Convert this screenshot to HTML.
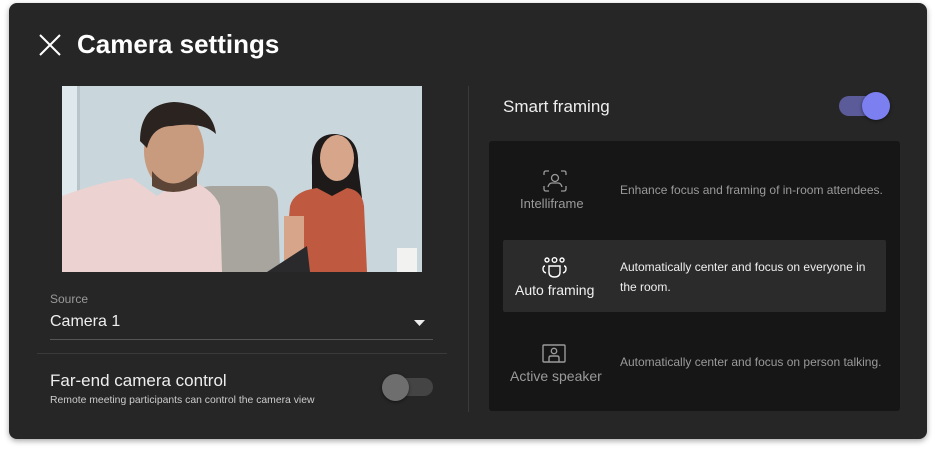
<!DOCTYPE html>
<html><head><style>
*{margin:0;padding:0;box-sizing:border-box}
body{width:936px;height:454px;background:#fff;font-family:"Liberation Sans",Roboto,sans-serif;position:relative;overflow:hidden}
.panel{position:absolute;left:9px;top:3px;width:918px;height:436px;background:#262626;border-radius:8px;box-shadow:0 2px 6px rgba(0,0,0,.35)}
.abs{position:absolute}
.t{color:#fff}
</style></head><body>
<div class="panel"></div>
<svg class="abs" style="left:38px;top:33px" width="24" height="24"><path d="M2 2L22 22M22 2L2 22" stroke="#fff" stroke-width="2"/></svg>
<div class="abs t" style="left:77px;top:29px;font-size:26px;font-weight:bold">Camera settings</div>

<svg class="abs" style="left:62px;top:86px" width="360" height="186" viewBox="0 0 360 186">
<rect width="360" height="186" fill="#c9d6dc"/>
<rect x="0" width="15" height="186" fill="#dfe8ec"/>
<rect x="15" width="3" height="186" fill="#b8c4c9"/>
<path d="M138 105 Q140 100 150 100 L205 100 Q215 102 216 115 L218 186 L150 186 Z" fill="#a8a59f"/>
<path d="M0 110 Q40 95 70 92 L95 110 L120 92 Q150 100 158 120 L160 186 L0 186Z" fill="#ecd2d0"/>
<ellipse cx="112" cy="65" rx="30" ry="40" fill="#c89a7e"/>
<path d="M78 55 Q78 18 112 16 Q150 18 154 48 Q140 35 110 40 Q90 40 85 62Z" fill="#2b2320"/>
<path d="M90 85 Q110 110 135 85 L135 100 Q110 112 90 100Z" fill="#5c4536"/>
<path d="M250 80 Q248 48 273 48 Q298 50 296 80 L300 112 L250 110Z" fill="#1e1a19"/>
<ellipse cx="275" cy="72" rx="17" ry="23" fill="#d7a68a"/>
<path d="M222 186 L228 120 Q232 105 255 102 L270 110 L285 102 Q300 104 302 120 L305 186Z" fill="#bf5a40"/>
<rect x="222" y="130" width="20" height="56" fill="#d7a68a"/>
<path d="M205 186 L245 160 L248 186Z" fill="#2a2a2c"/>
<rect x="335" y="162" width="20" height="24" fill="#f2f2f0"/>
</svg>

<div class="abs" style="left:50px;top:292px;font-size:12px;color:#9a9a9a">Source</div>
<div class="abs t" style="left:50px;top:313px;font-size:16px;color:#eee">Camera 1</div>
<svg class="abs" style="left:414px;top:320px" width="11" height="6"><path d="M0 0H11L5.5 6Z" fill="#eee"/></svg>
<div class="abs" style="left:50px;top:339px;width:383px;height:1px;background:#555"></div>
<div class="abs" style="left:37px;top:353px;width:410px;height:1px;background:#3a3a3a"></div>
<div class="abs t" style="left:50px;top:371px;font-size:17px;color:#eee">Far-end camera control</div>
<div class="abs" style="left:50px;top:395px;font-size:10.4px;color:#ccc">Remote meeting participants can control the camera view</div>
<div class="abs" style="left:385px;top:378px;width:48px;height:18px;border-radius:9px;background:#444"></div>
<div class="abs" style="left:382px;top:374px;width:27px;height:27px;border-radius:50%;background:#6e6e6e;box-shadow:0 1px 3px rgba(0,0,0,.5)"></div>

<div class="abs" style="left:468px;top:86px;width:1px;height:326px;background:#3a3a3a"></div>
<div class="abs t" style="left:503px;top:97px;font-size:17px;color:#eee">Smart framing</div>
<div class="abs" style="left:839px;top:96px;width:36px;height:20px;border-radius:10px;background:#5b5b9a"></div>
<div class="abs" style="left:862px;top:92px;width:28px;height:28px;border-radius:50%;background:#7b7ff0;box-shadow:0 1px 3px rgba(0,0,0,.5)"></div>

<div class="abs" style="left:489px;top:141px;width:411px;height:270px;background:#161616;border-radius:3px"></div>
<div class="abs" style="left:503px;top:240px;width:383px;height:72px;background:#2b2b2b;border-radius:2px"></div>

<svg class="abs" style="left:543px;top:170px" width="24" height="24" fill="none" stroke="#9a9a9a" stroke-width="1.3"><path d="M1 5V3Q1 1 3 1H6M18 1H21Q23 1 23 3V5M1 16V19Q1 21 3 21H6M23 16V19Q23 21 21 21H18"/><circle cx="12" cy="8" r="3.5"/><path d="M5 17Q6 13 9 13H15Q18 13 19 17"/></svg>
<div class="abs" style="left:520px;top:196px;font-size:13px;color:#9a9a9a">Intelliframe</div>
<div class="abs" style="left:620px;top:183px;font-size:12px;color:#9a9a9a">Enhance focus and framing of in-room attendees.</div>

<svg class="abs" style="left:542px;top:257px" width="25" height="22" fill="none" stroke="#fff" stroke-width="1.4"><circle cx="5" cy="3" r="2"/><circle cx="12.5" cy="3" r="2.3"/><circle cx="20" cy="3" r="2"/><path d="M3 9Q1 9 1 12Q1 15 4 16M22 9Q24 9 24 12Q24 15 21 16"/><path d="M7 9H18V15Q18 20 12.5 20Q7 20 7 15Z"/></svg>
<div class="abs t" style="left:515px;top:282px;font-size:14px;color:#f0f0f0">Auto framing</div>
<div class="abs t" style="left:620px;top:257px;font-size:12px;line-height:20px;color:#eee;width:260px">Automatically center and focus on everyone in the room.</div>

<svg class="abs" style="left:542px;top:344px" width="24" height="20" fill="none" stroke="#9a9a9a" stroke-width="1.4"><rect x="1" y="1" width="22" height="17" rx="1"/><circle cx="12" cy="7" r="2.7"/><path d="M7 18V14Q7 12 9 12H15Q17 12 17 14V18"/></svg>
<div class="abs" style="left:510px;top:368px;font-size:14px;color:#9a9a9a">Active speaker</div>
<div class="abs" style="left:620px;top:355px;font-size:12px;color:#9a9a9a">Automatically center and focus on person talking.</div>
</body></html>
